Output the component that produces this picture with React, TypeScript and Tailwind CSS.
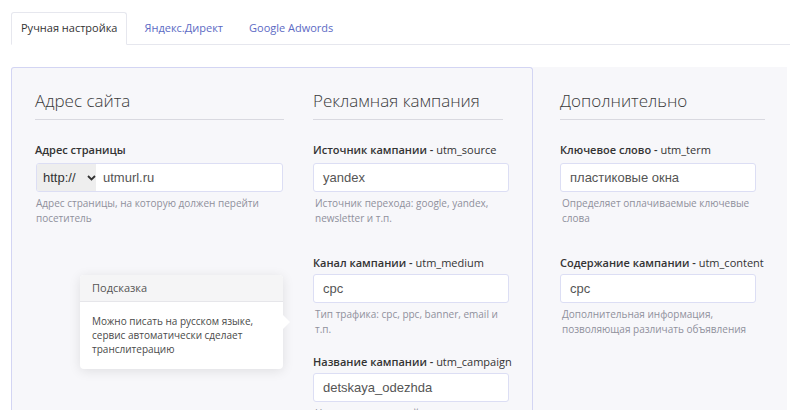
import React from "react";

function Label({ bold, rest }: { bold: string; rest?: string }) {
  return (
    <div className="text-[11px] leading-[16px] text-[#333] whitespace-nowrap">
      <span className="font-semibold">{bold}</span>
      {rest ? <span className="font-normal"> {rest}</span> : null}
    </div>
  );
}

function Help({ children }: { children: React.ReactNode }) {
  return <div className="text-[10px] leading-[15px] text-[#8f909c] whitespace-nowrap">{children}</div>;
}

function Input({ value, w }: { value: string; w: string }) {
  return (
    <div
      className={`${w} h-[29px] bg-white border border-[#dcdef4] rounded-[3px] flex items-center pl-[9px] text-[13px] text-[#555] font-['Liberation_Sans',Arial,sans-serif]`}
    >
      {value}
    </div>
  );
}

function Heading({ children, w }: { children: React.ReactNode; w: string }) {
  return (
    <div className={`${w} text-[17px] font-light leading-[24px] pb-[6px] border-b border-[#d9d9e0] text-[#3a3a3a]`}>
      {children}
    </div>
  );
}

export default function App() {
  return (
    <div className="w-[800px] h-[410px] bg-white overflow-hidden relative font-['Open_Sans',sans-serif]">
      <div className="pt-[12px] pl-[11px] pr-[10px]">
        <div className="flex items-end h-[33px] border-b border-[#e6e7ee]">
          <div className="h-[33px] px-[9px] bg-white border border-[#e6e7ee] border-b-white -mb-px rounded-t-[3px] flex items-center text-[11px] text-[#333]">
            Ручная настройка
          </div>
          <div className="h-[32px] ml-[3px] px-[14px] flex items-center text-[11px] text-[#5c6ac4]">
            Яндекс.Директ
          </div>
          <div className="h-[32px] px-[12px] flex items-center text-[11px] text-[#5c6ac4]">
            Google Adwords
          </div>
        </div>
      </div>

      <div className="flex pl-[11px] mt-[22px]">
        <div className="relative w-[522px] h-[400px] bg-[#f7f7fa] border border-b-0 border-[#d3d5f3] rounded-t-[3px] pt-[21px] pl-[23px] flex gap-[29px]">
          {/* Column 1 */}
          <div className="w-[249px]">
            <Heading w="w-[249px]">Адрес сайта</Heading>
            <div className="mt-[22px]">
              <Label bold="Адрес страницы" />
            </div>
            <div className="mt-[5px] w-[247px] h-[29px] ml-[1px] flex border border-[#dcdef4] rounded-[3px] bg-white overflow-hidden font-['Liberation_Sans',Arial,sans-serif] text-[13px]">
              <div className="w-[59px] h-full bg-[#eeeeee] flex items-center pl-[6px] text-[#333]">
                <span>http://</span>
                <svg width="9" height="6" viewBox="0 0 9 6" className="ml-[11px]">
                  <path d="M1 1 L4.5 4.5 L8 1" fill="none" stroke="#333" strokeWidth="1.8" />
                </svg>
              </div>
              <div className="flex items-center pl-[7px] text-[#555]">utmurl.ru</div>
            </div>
            <div className="mt-[4px] pl-[1px]">
              <Help>
                Адрес страницы, на которую должен перейти
                <br />
                посетитель
              </Help>
            </div>
          </div>

          {/* Column 2 */}
          <div className="w-[195px]">
            <Heading w="w-[190px]">Рекламная кампания</Heading>
            <div className="mt-[22px]">
              <Label bold="Источник кампании -" rest="utm_source" />
            </div>
            <div className="mt-[5px]">
              <Input value="yandex" w="w-[196px]" />
            </div>
            <div className="mt-[4px] pl-[2px]">
              <Help>
                Источник перехода: google, yandex,
                <br />
                newsletter и т.п.
              </Help>
            </div>
            <div className="mt-[29px]">
              <Label bold="Канал кампании -" rest="utm_medium" />
            </div>
            <div className="mt-[3px]">
              <Input value="cpc" w="w-[196px]" />
            </div>
            <div className="mt-[4px] pl-[2px]">
              <Help>
                Тип трафика: cpc, ppc, banner, email и
                <br />
                т.п.
              </Help>
            </div>
            <div className="mt-[17px]">
              <Label bold="Название кампании -" rest="utm_campaign" />
            </div>
            <div className="mt-[3px]">
              <Input value="detskaya_odezhda" w="w-[196px]" />
            </div>
            <div className="mt-[4px] pl-[2px]">
              <Help>
                Название рекламной акции, например
                <br />
                распродажа
              </Help>
            </div>
          </div>

          {/* Tooltip */}
          <div className="absolute left-[68px] top-[207px] w-[203px] h-[94px] bg-white rounded-[4px] shadow-[0_2px_12px_rgba(0,0,0,0.10)]">
            <div className="h-[27px] bg-[#f5f5f6] border-b border-[#e6e6ea] rounded-t-[4px] flex items-center pl-[12px] text-[11px] text-[#555]">
              Подсказка
            </div>
            <div className="pt-[12px] pl-[12px] pr-[8px] text-[10px] leading-[14px] text-[#4a4a4a]">
              Можно писать на русском языке,
              <br />
              сервис автоматически сделает
              <br />
              транслитерацию
            </div>
            <div className="absolute right-[-7px] top-[40px] w-0 h-0 border-y-[7px] border-y-transparent border-l-[7px] border-l-white" />
          </div>
        </div>

        {/* Column 3 */}
        <div className="w-[254px] h-[400px] bg-[#f7f7fa] pt-[22px] pl-[27px]">
          <Heading w="w-[205px]">Дополнительно</Heading>
          <div className="mt-[22px]">
            <Label bold="Ключевое слово -" rest="utm_term" />
          </div>
          <div className="mt-[5px]">
            <Input value="пластиковые окна" w="w-[196px]" />
          </div>
          <div className="mt-[4px] pl-[2px]">
            <Help>
              Определяет оплачиваемые ключевые
              <br />
              слова
            </Help>
          </div>
          <div className="mt-[29px]">
            <Label bold="Содержание кампании -" rest="utm_content" />
          </div>
          <div className="mt-[3px]">
            <Input value="cpc" w="w-[196px]" />
          </div>
          <div className="mt-[4px] pl-[2px]">
            <Help>
              Дополнительная информация,
              <br />
              позволяющая различать объявления
            </Help>
          </div>
        </div>
      </div>
    </div>
  );
}
